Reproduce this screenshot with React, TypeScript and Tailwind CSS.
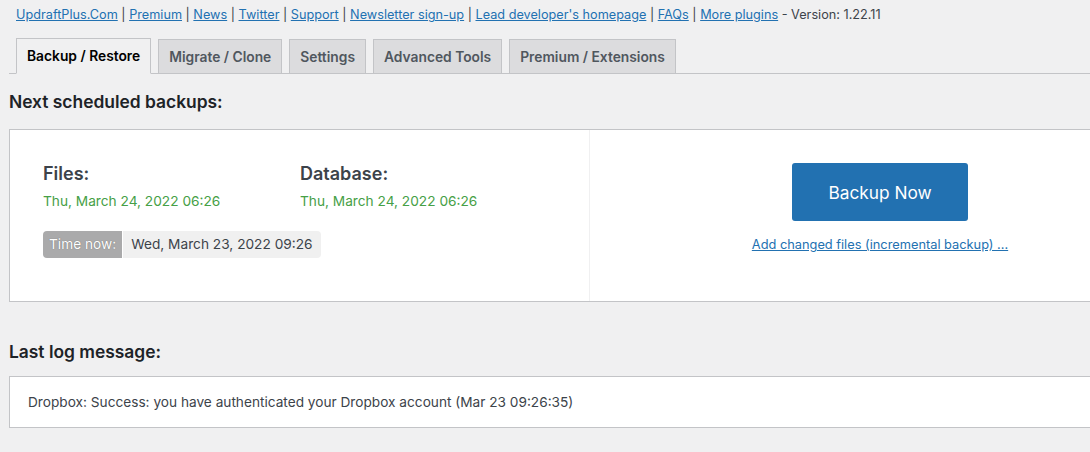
import React from "react";

const links = [
  "UpdraftPlus.Com",
  "Premium",
  "News",
  "Twitter",
  "Support",
  "Newsletter sign-up",
  "Lead developer's homepage",
  "FAQs",
  "More plugins",
];

const tabs = ["Backup / Restore", "Migrate / Clone", "Settings", "Advanced Tools", "Premium / Extensions"];

export default function App() {
  return (
    <div
      className="w-[1090px] h-[452px] overflow-hidden bg-[#f0f0f1] text-[#3c434a] text-[13px]"
      style={{ fontFamily: "Inter, 'Noto Sans', sans-serif" }}
    >
      <div className="pl-[9px]">
        <div className="pt-[6px] pl-[7px] leading-[18px] h-[38px] whitespace-nowrap text-[12.7px]">
          {links.map((l, i) => (
            <React.Fragment key={l}>
              <a className="text-[#2271b1] underline">{l}</a>
              {i < links.length - 1 ? " | " : ""}
            </React.Fragment>
          ))}
          <span> - Version: 1.22.11</span>
        </div>
        <div className="flex items-end border-b border-[#c3c4c7] pl-[7px] h-[36px]">
          {tabs.map((t, i) => (
            <div
              key={t}
              className={
                i === 0
                  ? "h-[36px] -mb-px px-[10px] pt-[1px] flex items-center border border-[#c3c4c7] border-b-[#f0f0f1] bg-[#f0f0f1] text-[#000] font-semibold text-[13.8px] mr-[7px]"
                  : "h-[35px] -mb-px px-[10px] pt-[1px] flex items-center border border-[#c3c4c7] bg-[#dcdcde] text-[#50575e] font-semibold text-[13.8px] mr-[7px]"
              }
            >
              {t}
            </div>
          ))}
        </div>
        <h2 className="text-[17.4px] font-semibold text-[#1d2327] mt-[17px] mb-[16px] leading-[22px]">Next scheduled backups:</h2>
        <div className="flex bg-white border border-[#c3c4c7] h-[173px] w-[1170px]">
          <div className="w-[580px] border-r border-[#f0f0f1] pl-[33px] pt-[32px]">
            <div className="flex">
              <div className="w-[257px]">
                <div className="text-[18px] font-semibold text-[#3c434a] leading-[24px]">Files:</div>
                <div className="text-[#46a046] text-[13.7px] mt-[6px] leading-[18px]">Thu, March 24, 2022 06:26</div>
              </div>
              <div>
                <div className="text-[18px] font-semibold text-[#3c434a] leading-[24px]">Database:</div>
                <div className="text-[#46a046] text-[13.7px] mt-[6px] leading-[18px]">Thu, March 24, 2022 06:26</div>
              </div>
            </div>
            <div className="flex mt-[21px] h-[27px] leading-[27px] text-[13.7px]">
              <span className="bg-[#aaaaab] text-white px-[6px] rounded-l-[4px] [text-shadow:0_0_1px_#666]">Time now:</span>
              <span className="bg-[#f0f0f0] text-[#3c434a] ml-px px-[8px] rounded-r-[4px]">Wed, March 23, 2022 09:26</span>
            </div>
          </div>
          <div className="w-[580px] flex flex-col items-center pt-[33px]">
            <button className="w-[176px] h-[58px] bg-[#2271b1] rounded-[3px] text-white text-[17.3px] pt-[2px]">Backup Now</button>
            <a className="text-[#2271b1] underline text-[12.8px] mt-[14px] leading-[19px]">Add changed files (incremental backup) ...</a>
          </div>
        </div>
        <h2 className="text-[17.4px] font-semibold text-[#1d2327] mt-[39px] mb-[13px] leading-[22px]">Last log message:</h2>
        <div className="bg-white border border-[#c3c4c7] h-[52px] w-[1100px] flex items-center pl-[18px] text-[13.67px]">
          Dropbox: Success: you have authenticated your Dropbox account (Mar 23 09:26:35)
        </div>
      </div>
    </div>
  );
}
